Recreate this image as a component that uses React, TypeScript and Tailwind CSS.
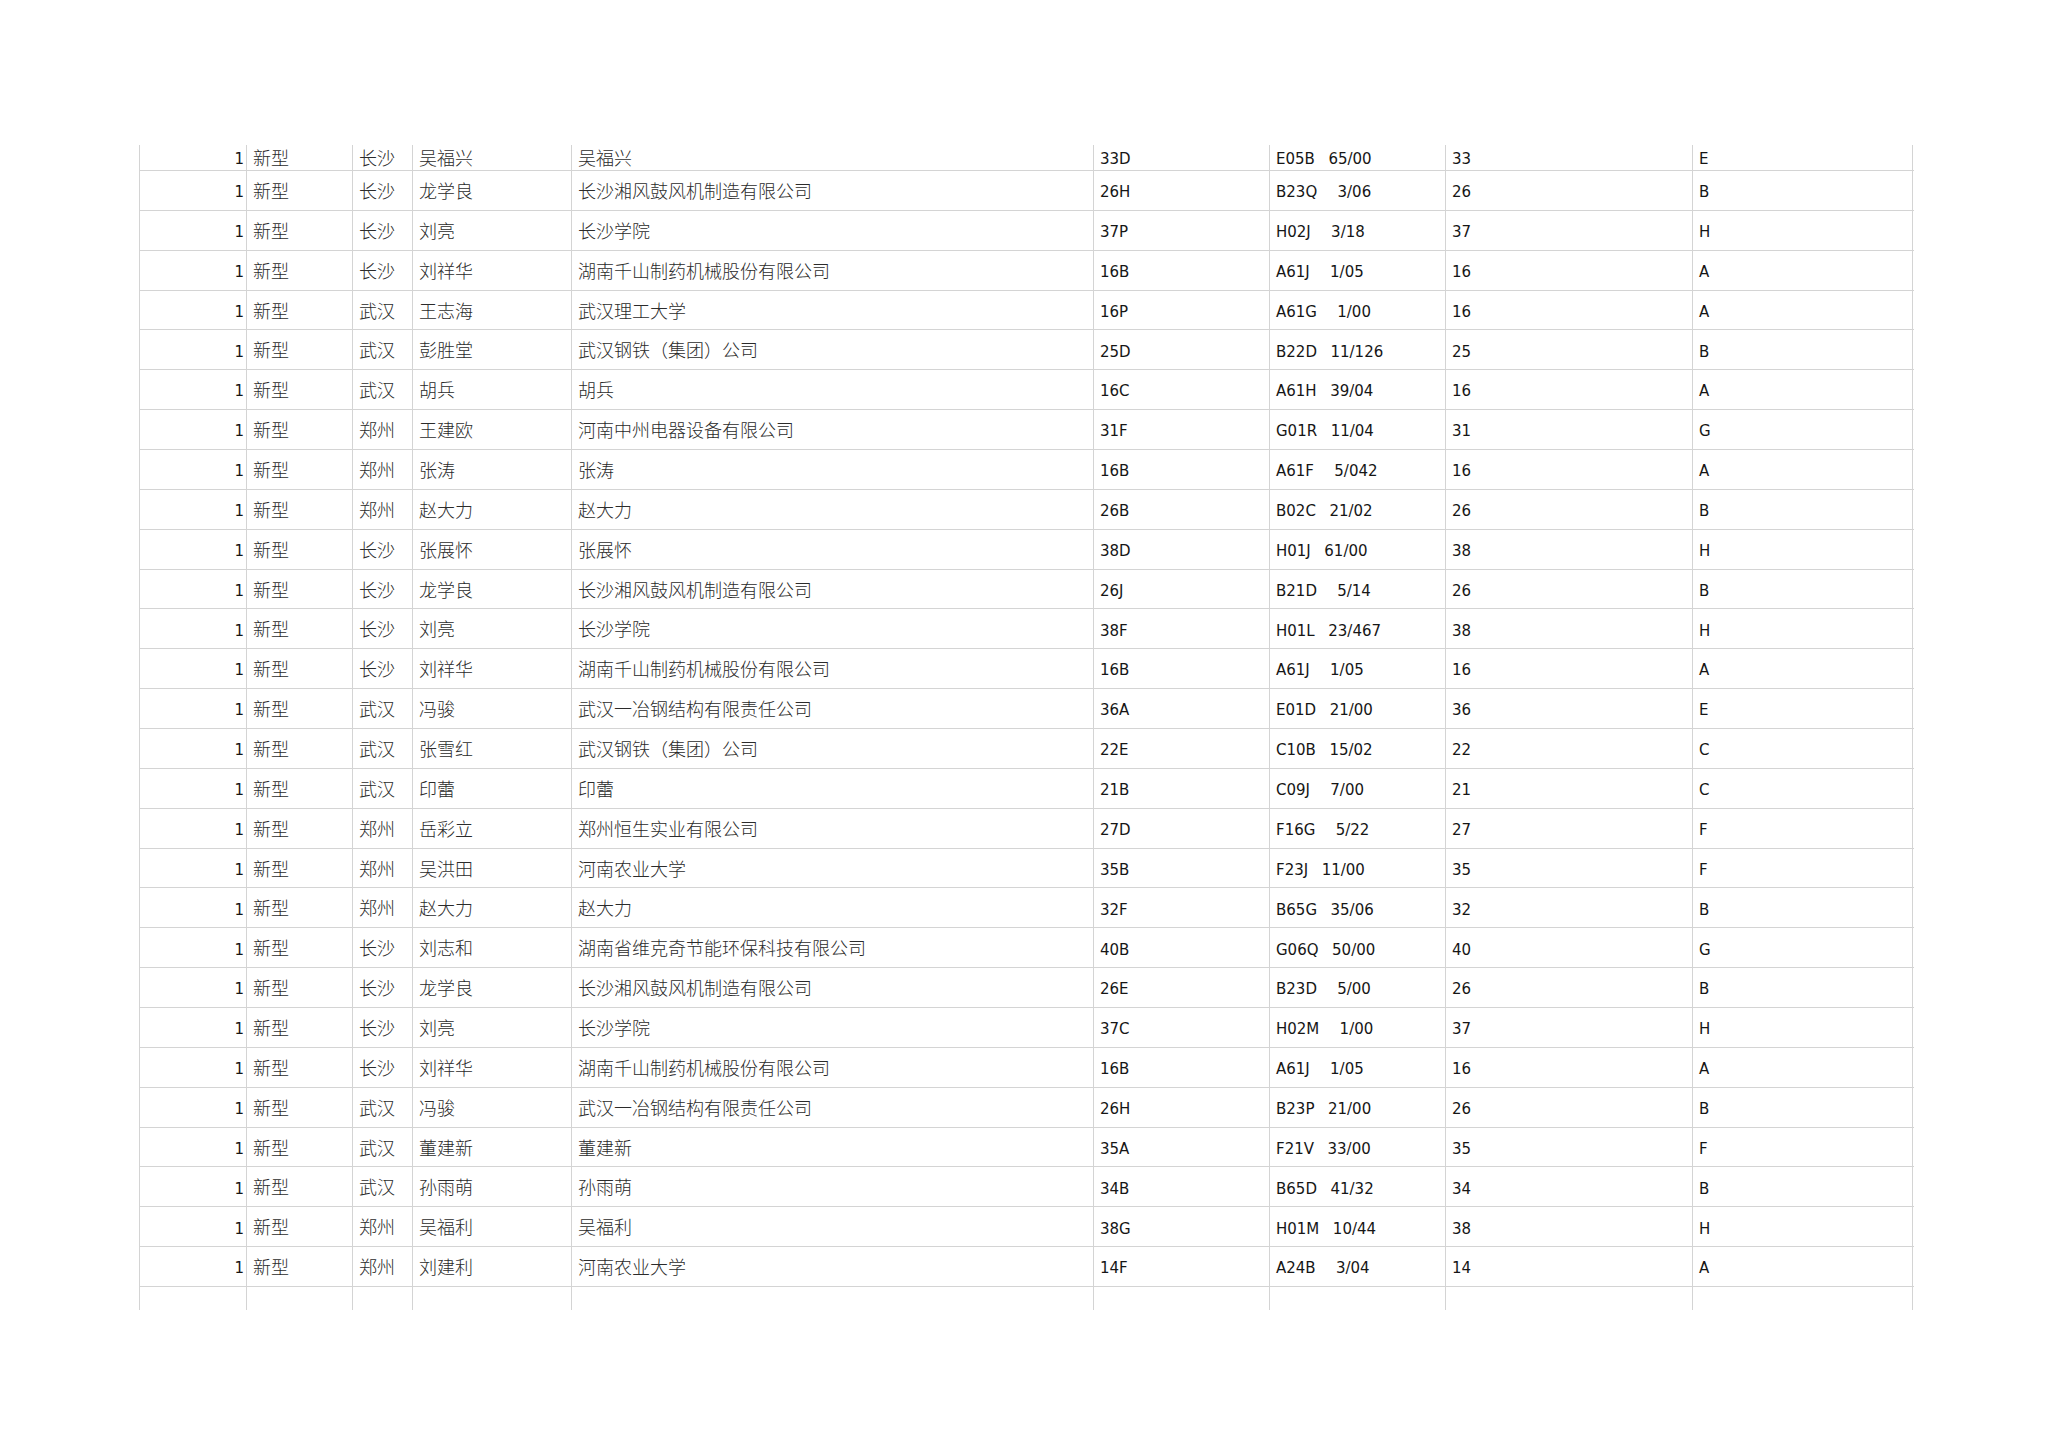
const ROWS: string[][] = [
  ['长沙', '吴福兴', '吴福兴', '33D', 'E05B  65/00', '33', 'E'],
  ['长沙', '龙学良', '长沙湘风鼓风机制造有限公司', '26H', 'B23Q   3/06', '26', 'B'],
  ['长沙', '刘亮', '长沙学院', '37P', 'H02J   3/18', '37', 'H'],
  ['长沙', '刘祥华', '湖南千山制药机械股份有限公司', '16B', 'A61J   1/05', '16', 'A'],
  ['武汉', '王志海', '武汉理工大学', '16P', 'A61G   1/00', '16', 'A'],
  ['武汉', '彭胜堂', '武汉钢铁（集团）公司', '25D', 'B22D  11/126', '25', 'B'],
  ['武汉', '胡兵', '胡兵', '16C', 'A61H  39/04', '16', 'A'],
  ['郑州', '王建欧', '河南中州电器设备有限公司', '31F', 'G01R  11/04', '31', 'G'],
  ['郑州', '张涛', '张涛', '16B', 'A61F   5/042', '16', 'A'],
  ['郑州', '赵大力', '赵大力', '26B', 'B02C  21/02', '26', 'B'],
  ['长沙', '张展怀', '张展怀', '38D', 'H01J  61/00', '38', 'H'],
  ['长沙', '龙学良', '长沙湘风鼓风机制造有限公司', '26J', 'B21D   5/14', '26', 'B'],
  ['长沙', '刘亮', '长沙学院', '38F', 'H01L  23/467', '38', 'H'],
  ['长沙', '刘祥华', '湖南千山制药机械股份有限公司', '16B', 'A61J   1/05', '16', 'A'],
  ['武汉', '冯骏', '武汉一冶钢结构有限责任公司', '36A', 'E01D  21/00', '36', 'E'],
  ['武汉', '张雪红', '武汉钢铁（集团）公司', '22E', 'C10B  15/02', '22', 'C'],
  ['武汉', '印蕾', '印蕾', '21B', 'C09J   7/00', '21', 'C'],
  ['郑州', '岳彩立', '郑州恒生实业有限公司', '27D', 'F16G   5/22', '27', 'F'],
  ['郑州', '吴洪田', '河南农业大学', '35B', 'F23J  11/00', '35', 'F'],
  ['郑州', '赵大力', '赵大力', '32F', 'B65G  35/06', '32', 'B'],
  ['长沙', '刘志和', '湖南省维克奇节能环保科技有限公司', '40B', 'G06Q  50/00', '40', 'G'],
  ['长沙', '龙学良', '长沙湘风鼓风机制造有限公司', '26E', 'B23D   5/00', '26', 'B'],
  ['长沙', '刘亮', '长沙学院', '37C', 'H02M   1/00', '37', 'H'],
  ['长沙', '刘祥华', '湖南千山制药机械股份有限公司', '16B', 'A61J   1/05', '16', 'A'],
  ['武汉', '冯骏', '武汉一冶钢结构有限责任公司', '26H', 'B23P  21/00', '26', 'B'],
  ['武汉', '董建新', '董建新', '35A', 'F21V  33/00', '35', 'F'],
  ['武汉', '孙雨萌', '孙雨萌', '34B', 'B65D  41/32', '34', 'B'],
  ['郑州', '吴福利', '吴福利', '38G', 'H01M  10/44', '38', 'H'],
  ['郑州', '刘建利', '河南农业大学', '14F', 'A24B   3/04', '14', 'A'],
];

const GRID = 'grid grid-cols-[107px_106px_60px_159px_522px_176px_176px_247px_221px]';
const CELL = 'flex items-center border-l border-[#d4d4d4] whitespace-pre overflow-hidden';
const CJK = "font-['Noto_Sans_CJK_SC',sans-serif] font-light text-[18px] text-[#2b2b2b] pl-[6px]";
const LAT = "font-['DejaVu_Sans',sans-serif] text-[15px] text-[#161616] pl-[6px] pt-[4px] [word-spacing:2px]";

function Row({ cells, first }: { cells: string[]; first?: boolean }) {
  const [city, person, org, code, ipc, num, letter] = cells;
  const h = first ? 'h-[26px]' : 'h-[39.86px]';
  return (
    <div className={`${GRID} ${h} border-b border-[#d4d4d4]`}>
      <div className={`${CELL} justify-end pr-[2px] pt-[4px] font-['DejaVu_Sans',sans-serif] text-[15px] text-[#161616]`}>1</div>
      <div className={`${CELL} ${CJK}`}>新型</div>
      <div className={`${CELL} ${CJK}`}>{city}</div>
      <div className={`${CELL} ${CJK}`}>{person}</div>
      <div className={`${CELL} ${CJK}`}>{org}</div>
      <div className={`${CELL} ${LAT}`}>{code}</div>
      <div className={`${CELL} ${LAT}`}>{ipc}</div>
      <div className={`${CELL} ${LAT}`}>{num}</div>
      <div className={`${CELL} ${LAT} border-r`}>{letter}</div>
    </div>
  );
}

export default function App() {
  return (
    <div className="w-[2048px] h-[1447px] bg-white pt-[145px] pl-[139px] overflow-hidden">
      <div className="w-[1775px]">
        {ROWS.map((r, i) => (
          <Row key={i} cells={r} first={i === 0} />
        ))}
        {/* trailing empty row, cut at page edge */}
        <div className={`${GRID} h-[23px]`}>
          {Array.from({ length: 9 }).map((_, i) => (
            <div key={i} className={`border-l border-[#d4d4d4] ${i === 8 ? 'border-r' : ''}`} />
          ))}
        </div>
      </div>
    </div>
  );
}
